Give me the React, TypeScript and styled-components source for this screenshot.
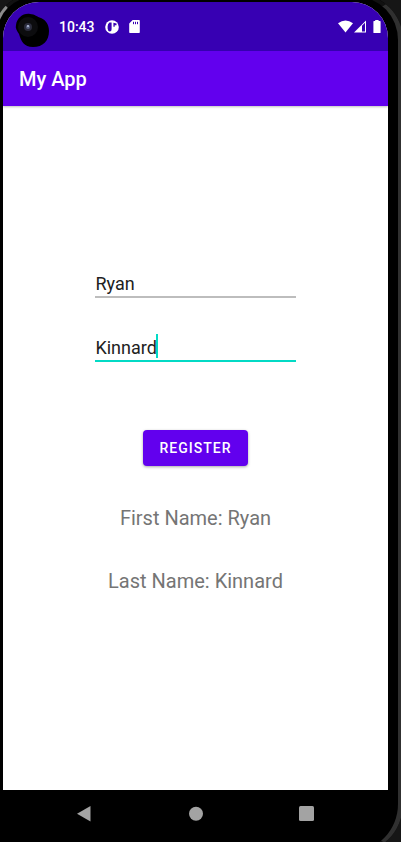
import React, { useState } from "react";
import styled, { createGlobalStyle } from "styled-components";

const GlobalStyle = createGlobalStyle`
  *, *::before, *::after { box-sizing: border-box; }
  body {
    margin: 0;
    background: #000;
    font-family: Roboto, "Liberation Sans", sans-serif;
  }
`;

const Device = styled.div`
  position: relative;
  display: flex;
  flex-direction: column;
  min-height: 100vh;
  padding: 2px 13px 0 3px;
  overflow: hidden;
  background: #000;
`;

const Rim = styled.div`
  position: absolute;
  inset: -6px -2px -12px -6px;
  border: 3px solid #111;
  border-left-color: #8c8c8c;
  border-right: 5px solid #303030;
  border-radius: 40px 46px 50px 0;
  box-shadow: 0 0 0 20px #161616;
  pointer-events: none;
`;

const Screen = styled.div`
  position: relative;
  flex: 1;
  display: flex;
  flex-direction: column;
  overflow: hidden;
  border-radius: 36px 36px 0 0;
  background: #fff;
`;

const StatusBar = styled.div`
  display: flex;
  align-items: center;
  height: 49px;
  padding: 0 7px 0 56px;
  background: #3700b3;
  color: #fff;
`;

const Clock = styled.time`
  margin-right: 10px;
  font-size: 14px;
  font-weight: 500;
  line-height: 16px;
`;

const StatusIcons = styled.div<{ $gap: number }>`
  display: flex;
  align-items: center;
  gap: ${(p) => p.$gap}px;
  & + & { margin-left: auto; }
  svg { display: block; }
`;

const Camera = styled.svg`
  position: absolute;
  left: 12px;
  top: 11px;
`;

const AppBar = styled.header`
  position: relative;
  display: flex;
  align-items: center;
  height: 55px;
  padding: 1px 16px 0;
  background: #6200ee;
  box-shadow: 0 1px 2px rgba(0, 0, 0, 0.25);
`;

const Title = styled.h1`
  margin: 0;
  color: #fff;
  font-size: 20px;
  font-weight: 500;
  line-height: 24px;
`;

const Form = styled.form`
  display: flex;
  flex-direction: column;
  align-items: center;
  padding-top: 164px;
`;

const Field = styled.label<{ $active: boolean }>`
  display: flex;
  align-items: flex-end;
  width: 52%;
  height: 28px;
  margin-bottom: 36px;
  border-bottom: 2px solid ${(p) => (p.$active ? "#03dac5" : "#bdbdbd")};
  cursor: text;
`;

const TextInput = styled.input`
  field-sizing: content;
  min-width: 1px;
  max-width: 100%;
  padding: 0;
  border: 0;
  outline: 0;
  background: transparent;
  color: #212121;
  caret-color: transparent;
  font-family: inherit;
  font-size: 18px;
  line-height: 24px;
`;

const Caret = styled.span`
  flex: none;
  align-self: flex-start;
  width: 2px;
  height: 24px;
  margin-left: -1px;
  background: #03dac5;
`;

const RegisterButton = styled.button`
  height: 36px;
  margin-top: 32px;
  padding: 0 17px;
  border: 0;
  border-radius: 4px;
  background: #6200ee;
  color: #fff;
  box-shadow: 0 1px 3px rgba(0, 0, 0, 0.35);
  font-family: inherit;
  font-size: 14px;
  font-weight: 500;
  letter-spacing: 1px;
  text-transform: uppercase;
  cursor: pointer;
`;

const Results = styled.div`
  display: flex;
  flex-direction: column;
  align-items: center;
  gap: 39px;
  padding: 40px 16px;
`;

const Result = styled.p`
  margin: 0;
  color: #757575;
  font-size: 20px;
  line-height: 24px;
`;

const NavBar = styled.nav`
  display: flex;
  justify-content: center;
  gap: 87px;
  height: 52px;
  padding-top: 12px;
`;

const NavButton = styled.button`
  width: 24px;
  height: 24px;
  padding: 0;
  border: 0;
  background: transparent;
  color: #a3a3a3;
  cursor: pointer;
  svg { display: block; }
`;

type FieldName = "first" | "last";

export default function App() {
  const [first, setFirst] = useState("Ryan");
  const [last, setLast] = useState("Kinnard");
  const [active, setActive] = useState<FieldName>("last");
  const [registered, setRegistered] = useState({ first: "Ryan", last: "Kinnard" });

  return (
    <>
      <GlobalStyle />
      <Device>
        <Screen>
          <StatusBar>
            <Clock>10:43</Clock>
            <StatusIcons $gap={10}>
              <svg width="14" height="14" viewBox="0 0 14 14" aria-hidden="true">
                <circle cx="7" cy="7" r="6.8" fill="#fff" />
                <path
                  d="M6.600 2.400H4.400Q2.600 3.800 2.600 6.400v2q.2 2.600 2.200 3 1.800 0 1.800-2.200zM8.400 2.800v4h1.300V5.200h1.800V3.600z"
                  fill="#3700b3"
                />
              </svg>
              <svg width="11" height="13" viewBox="0 0 11 13" aria-hidden="true">
                <path d="M3.6 0H10q.8 0 .8.8v11.4q0 .8-.8.8H1q-.8 0-.8-.8V3.600z" fill="#fff" />
                <path d="M4.500 1.800v2.400M6.500 1.800v2.400M8.500 1.800v2.400" stroke="#3700b3" strokeWidth="1" />
              </svg>
            </StatusIcons>
            <StatusIcons $gap={1}>
              <svg width="15" height="13" viewBox="0 0 15 13" aria-hidden="true">
                <path d="M0 3.2Q7.5-2.4 15 3.2L7.5 12.6z" fill="#fff" />
              </svg>
              <svg width="12" height="13" viewBox="0 0 12 13" aria-hidden="true">
                <path d="M12 .5V12.5H0z" fill="#fff" />
                <path d="M8 5.800L11 2.800V11.500H8z" fill="#3700b3" />
              </svg>
              <svg width="14" height="13" viewBox="0 0 14 13" aria-hidden="true">
                <path d="M8.2 1V0h3.4v1H13q.6 0 .6.6v10.800q0 .6-.6.6H7q-.6 0-.6-.6V1.600Q6.400 1 7 1z" fill="#fff" />
              </svg>
            </StatusIcons>
          </StatusBar>
          <AppBar>
            <Title>My App</Title>
          </AppBar>
          <Form
            onSubmit={(e) => {
              e.preventDefault();
              setRegistered({ first, last });
            }}
          >
            <Field $active={active === "first"}>
              <TextInput
                aria-label="First name"
                value={first}
                onFocus={() => setActive("first")}
                onChange={(e) => setFirst(e.target.value)}
              />
              {active === "first" && <Caret />}
            </Field>
            <Field $active={active === "last"}>
              <TextInput
                aria-label="Last name"
                value={last}
                onFocus={() => setActive("last")}
                onChange={(e) => setLast(e.target.value)}
              />
              {active === "last" && <Caret />}
            </Field>
            <RegisterButton type="submit">Register</RegisterButton>
          </Form>
          <Results>
            <Result>First Name: {registered.first}</Result>
            <Result>Last Name: {registered.last}</Result>
          </Results>
          <Camera width="36" height="36" viewBox="0 0 36 36" aria-hidden="true">
            <path d="M1 12C2 5 8 0 15 1c5 0 7 3 11 4 5 2 8 7 8 13 0 10-6 16-16 16-9 0-12-6-14-13C2 18 0 15 1 12z" fill="#000" />
            <circle cx="13" cy="14" r="10" fill="#0c0c0e" />
            <circle cx="13" cy="14" r="4" fill="#2b2c3c" />
            <circle cx="13" cy="14" r="2" fill="#596080" />
            <circle cx="13" cy="13" r="1" fill="#b9c2dd" />
          </Camera>
        </Screen>
        <NavBar>
          <NavButton aria-label="Back">
            <svg width="24" height="24" viewBox="0 0 24 24">
              <path d="M17.500 4v15.500L4 11.800z" fill="currentColor" />
            </svg>
          </NavButton>
          <NavButton aria-label="Home">
            <svg width="24" height="24" viewBox="0 0 24 24">
              <circle cx="12" cy="11.700" r="7" fill="currentColor" />
            </svg>
          </NavButton>
          <NavButton aria-label="Recent apps">
            <svg width="24" height="24" viewBox="0 0 24 24">
              <rect x="4" y="4" width="15" height="15" rx="1.500" fill="currentColor" />
            </svg>
          </NavButton>
        </NavBar>
        <Rim />
      </Device>
    </>
  );
}
